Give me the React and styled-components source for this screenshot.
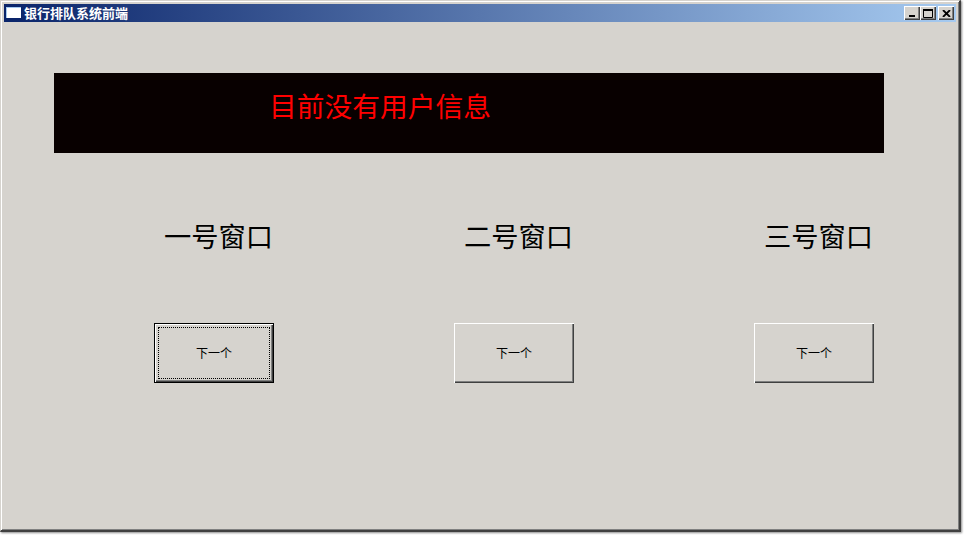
import React from 'react';
import styled, { createGlobalStyle } from 'styled-components';

const GlobalStyle = createGlobalStyle`
  html, body {
    margin: 0;
    background: #ffffff;
    overflow: hidden;
  }
`;

const Desktop = styled.div`
  width: 964px;
  height: 535px;
  overflow: hidden;
`;

const Window = styled.div`
  width: 961px;
  height: 532px;
  box-sizing: border-box;
  display: flex;
  flex-direction: column;
  background: #d6d3ce;
  border-style: solid;
  border-width: 1px 2px 2px 1px;
  border-color: #d6d3ce #404040 #404040 #d6d3ce;
  box-shadow: inset 1px 1px 0 #ffffff, inset -1px -1px 0 #808080, 1px 1px 2px #8c8c8c;
  padding: 3px 3px 2px 3px;
`;

const TitleBar = styled.div`
  height: 18px;
  flex: none;
  display: flex;
  align-items: center;
  padding: 0 2px;
  background: linear-gradient(90deg, #0a246a 0%, #a6caf0 100%);
`;

const TitleIcon = styled.svg`
  width: 16px;
  height: 14px;
  flex: none;
  margin-right: 2px;
`;

const TitleText = styled.span`
  font: bold 13px/16px "Noto Sans CJK SC", sans-serif;
  color: #ffffff;
  flex: 1;
`;

const CaptionButtons = styled.div`
  display: flex;
  align-items: center;
`;

const CaptionButton = styled.button`
  width: 16px;
  height: 14px;
  padding: 0;
  margin-left: ${(p) => (p.$gap ? '2px' : '0')};
  display: flex;
  align-items: center;
  justify-content: center;
  background: #d6d3ce;
  border: 0;
  box-shadow: inset 1px 1px 0 #ffffff, inset -1px -1px 0 #404040, inset -2px -2px 0 #808080;
`;

const Client = styled.div`
  flex: 1;
  padding: 51px 0 0 50px;
`;

const Banner = styled.div`
  width: 830px;
  height: 80px;
  box-sizing: border-box;
  padding: 14px 0 0 215px;
  background: #080000;
  color: #ff0000;
  font: 27.75px/36px "Noto Sans CJK SC", sans-serif;
  white-space: nowrap;
`;

const Counters = styled.div`
  display: grid;
  grid-template-columns: 300px 300px 200px;
  margin: 62px 0 0 100px;
`;

const Counter = styled.div`
  display: flex;
  flex-direction: column;
  align-items: flex-start;
`;

const CounterName = styled.div`
  height: 40px;
  margin: 0 0 68px 10px;
  color: #000000;
  font: 27.25px/40px "Noto Sans CJK SC", sans-serif;
  white-space: nowrap;
`;

const NextButton = styled.button`
  position: relative;
  width: 120px;
  height: 60px;
  box-sizing: border-box;
  padding: 0;
  background: #d6d3ce;
  color: #000000;
  font: 12px/14px "Noto Sans CJK SC", sans-serif;
  border: ${(p) => (p.$focused ? '1px solid #000000' : '0')};
  box-shadow: inset 1px 1px 0 #ffffff, inset -1px -1px 0 #404040, inset -2px -2px 0 #808080;
`;

const FocusRing = styled.span`
  position: absolute;
  inset: 3px;
  border: 1px dotted #000000;
`;

const counters = ['一号窗口', '二号窗口', '三号窗口'];

const App = () => (
  <Desktop>
    <GlobalStyle />
    <Window>
      <TitleBar>
        <TitleIcon viewBox="0 0 16 14">
          <rect x="0" y="1" width="16" height="13" fill="#0a246a" />
          <rect x="1" y="2" width="14" height="10" fill="#ffffff" />
          <rect x="0" y="1" width="15" height="1" fill="#a6caf0" />
          <rect x="0" y="2" width="1" height="10" fill="#a6caf0" />
        </TitleIcon>
        <TitleText>银行排队系统前端</TitleText>
        <CaptionButtons>
          <CaptionButton aria-label="minimize">
            <svg width="8" height="8" viewBox="0 0 8 8">
              <rect x="1" y="6" width="6" height="2" fill="#000" />
            </svg>
          </CaptionButton>
          <CaptionButton aria-label="maximize">
            <svg width="10" height="9" viewBox="0 0 10 9">
              <path d="M0.5 1.5H9.5V8.5H0.5Z" fill="none" stroke="#000" />
              <rect x="0" y="0" width="10" height="2" fill="#000" />
            </svg>
          </CaptionButton>
          <CaptionButton aria-label="close" $gap>
            <svg width="9" height="7" viewBox="0 0 9 7">
              <path d="M1 0L8 7M8 0L1 7" stroke="#000" strokeWidth="1.8" />
            </svg>
          </CaptionButton>
        </CaptionButtons>
      </TitleBar>
      <Client>
        <Banner>目前没有用户信息</Banner>
        <Counters>
          {counters.map((name, i) => (
            <Counter key={name}>
              <CounterName>{name}</CounterName>
              <NextButton $focused={i === 0}>
                {i === 0 && <FocusRing />}
                下一个
              </NextButton>
            </Counter>
          ))}
        </Counters>
      </Client>
    </Window>
  </Desktop>
);

export default App;
